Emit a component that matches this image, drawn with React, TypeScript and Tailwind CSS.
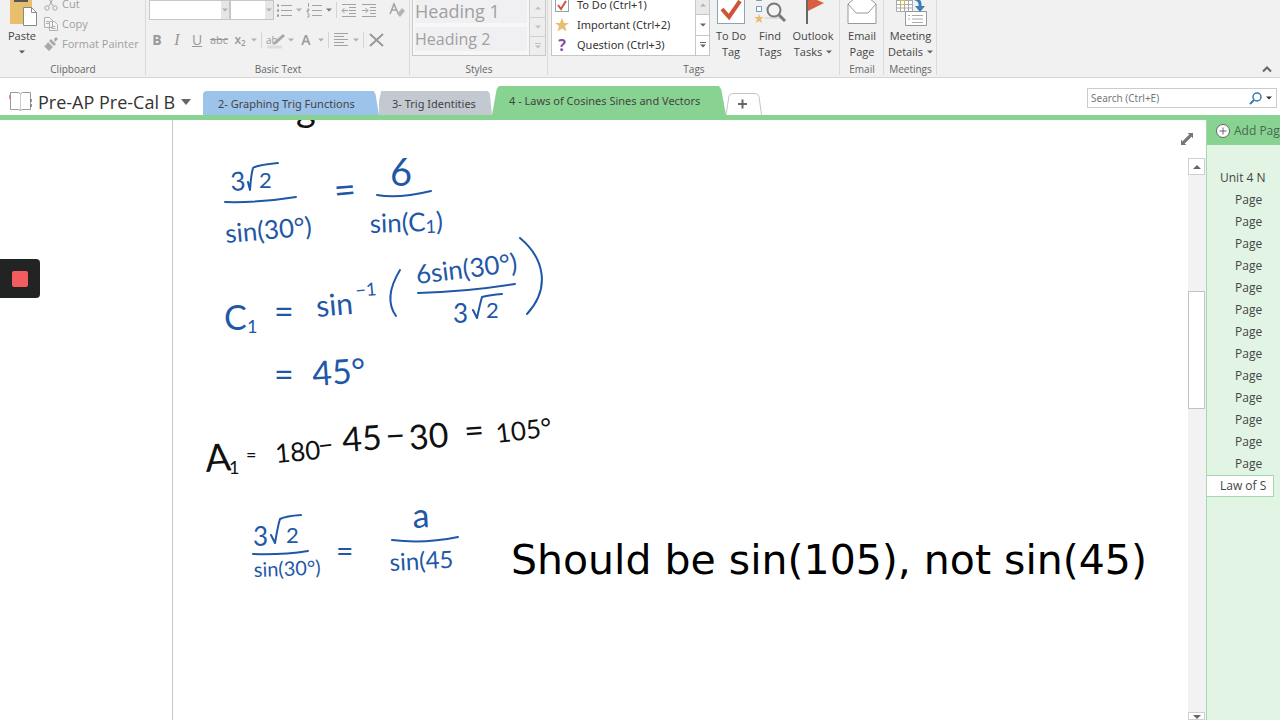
import type { ReactNode } from 'react';

function Caret({ className = 'text-[#b0b0b0]' }: { className?: string }) {
  return (
    <svg viewBox="0 0 6 4" className={`h-1 w-1.5 shrink-0 ${className}`} aria-hidden="true">
      <path d="M0 0.5h6L3 3.5z" fill="currentColor" />
    </svg>
  );
}

function Group({ label, className, children }: { label: string; className: string; children: ReactNode }) {
  return (
    <section aria-label={label} className={`relative flex shrink-0 flex-col justify-end ${className}`}>
      {children}
      <h2 className="flex h-4 shrink-0 items-center justify-center text-[10px] text-[#666]">{label}</h2>
      <span className="absolute right-0 bottom-0.5 h-20 w-px bg-[#dadada]" />
    </section>
  );
}

function BigButton({ icon, top, bottom, caret, className }: { icon: ReactNode; top: string; bottom: string; caret?: boolean; className: string }) {
  return (
    <button type="button" className={`flex flex-col items-center pb-px text-[11px] leading-4 text-[#444] ${className}`}>
      {icon}
      <span className="mt-1">{top}</span>
      <span className="flex items-center gap-1">
        {bottom}
        {caret && <Caret className="text-[#666]" />}
      </span>
    </button>
  );
}

function Rule() {
  return <span className="h-4 w-px bg-[#d5d5d5]" />;
}

function Lines({ d, label, children }: { d: string; label: string; children?: ReactNode }) {
  return (
    <button type="button" aria-label={label}>
      <svg viewBox="0 0 16 16" className="size-4" fill="none" stroke="#a3a3a3">
        <path d={d} />
        {children}
      </svg>
    </button>
  );
}

function ClipboardGroup() {
  return (
    <Group label="Clipboard" className="w-[146px]">
      <div className="flex items-end">
        <button type="button" className="flex w-11 flex-col items-center pb-px text-[11px] leading-4 text-[#444]">
          <svg viewBox="0 0 30 34" className="h-[34px] w-[30px]" aria-hidden="true">
            <rect x="3" y="3" width="22" height="29" fill="#e8bf6c" />
            <rect x="7" y="0" width="14" height="10" fill="#555" />
            <path d="M16.500 15.500h8l5 5v13h-13z" fill="#fff" stroke="#888" />
            <path d="M24.500 15.500v5h5" fill="none" stroke="#888" />
          </svg>
          <span className="mt-0.5">Paste</span>
          <span className="flex h-4 items-center"><Caret className="text-[#555]" /></span>
        </button>
        <div className="flex flex-col pb-[7px] text-[11px] text-[#a0a0a0]">
          <button type="button" className="flex h-5 items-center gap-1">
            <svg viewBox="0 0 14 14" className="size-3.5" fill="none" stroke="#a8a8a8" aria-hidden="true">
              <path d="M4 0l5 9M10 0L5 9" />
              <circle cx="3" cy="11" r="2.200" />
              <circle cx="11" cy="11" r="2.200" />
            </svg>
            Cut
          </button>
          <button type="button" className="flex h-5 items-center gap-1">
            <svg viewBox="0 0 14 14" className="size-3.5" fill="#f5f5f5" stroke="#b0b0b0" aria-hidden="true">
              <path d="M.5.5h5l3 3v7h-8zM5.500 4.500h5l3 3v6h-8z" />
              <path d="M2 4.500h3M2 6.500h3M7.500 9.500h4M7.500 11.500h4" />
            </svg>
            Copy
          </button>
          <button type="button" className="flex h-5 items-center gap-1">
            <svg viewBox="0 0 14 14" className="size-3.5" fill="#a8a8a8" aria-hidden="true">
              <path d="M10 2l2-2 2 2-3 3zM5 4l2-2 5 5-2 2zM4 5l5 5-4 4-5-5 2-1z" />
            </svg>
            Format Painter
          </button>
        </div>
      </div>
    </Group>
  );
}

function BasicTextGroup() {
  return (
    <Group label="Basic Text" className="w-[264px]">
      <div className="flex flex-col gap-2.5 pb-[11px] pl-[3px]">
        <div className="flex h-5 items-center">
          <button type="button" aria-label="Font" className="flex h-5 w-[81px] justify-end border border-[#c6c6c6] bg-white">
            <span className="flex h-full w-2 items-center justify-center bg-[#e6e6e6]"><Caret /></span>
          </button>
          <button type="button" aria-label="Font size" className="flex h-5 w-11 justify-end border border-[#c6c6c6] bg-white">
            <span className="flex h-full w-2 items-center justify-center bg-[#e6e6e6]"><Caret /></span>
          </button>
          <div className="ml-0.5 flex items-center gap-1">
            <Lines label="Bullets" d="M5 3.500h11M5 8.500h11M5 13.500h11">
              <path d="M1 3.500h2M1 8.500h2M1 13.500h2" strokeWidth="2.500" />
            </Lines>
            <Caret />
            <Lines label="Numbering" d="M6 3.500h10M6 8.500h10M6 13.500h10M2.500 1v4M1 7h2v1.500H1V10h2M1 12h2v3H1" />
            <Caret className="text-[#777]" />
            <Rule />
            <Lines label="Decrease indent" d="M1 2.500h14M8 5.500h7M8 8.500h7M8 11.500h7M1 14.500h14M7 8.500H1M3.500 6L1 8.500 3.500 11" />
            <Lines label="Increase indent" d="M1 2.500h14M9 5.500h6M9 8.500h6M9 11.500h6M1 14.500h14M1 8.500h6M4.500 6L7 8.500 4.500 11" />
          </div>
          <button type="button" aria-label="Clear formatting" className="ml-3">
            <svg viewBox="0 0 16 16" className="size-4" fill="none" stroke="#a3a3a3" strokeWidth="1.500">
              <path d="M1 12L5 2l4 9M2.500 8h5" />
              <path d="M8 12l5-6 3 3-5 6z" fill="#b4b4b4" stroke="none" />
            </svg>
          </button>
        </div>
        <div className="flex h-5 items-center gap-1 text-[#999]">
          <button type="button" className="w-4 text-sm font-bold">B</button>
          <button type="button" className="w-4 font-['Liberation_Serif',serif] text-base italic">I</button>
          <button type="button" className="w-4 text-sm underline">U</button>
          <button type="button" className="w-5 text-[11px] line-through">abc</button>
          <button type="button" className="w-3.5 text-xs font-semibold whitespace-nowrap">x<sub className="text-[8px]">2</sub></button>
          <Caret />
          <Rule />
          <button type="button" aria-label="Highlight" className="relative w-[18px] text-left text-[10px] leading-5">
            ab
            <svg viewBox="0 0 20 20" className="absolute inset-0 size-5" aria-hidden="true">
              <path d="M17 4l2 2-9 8-3 1 1-3z" fill="#a6a6a6" />
              <path d="M1 17h15" stroke="#ddd" strokeWidth="3" />
            </svg>
          </button>
          <Caret />
          <button type="button" className="w-4 text-sm font-semibold">A</button>
          <Caret />
          <Rule />
          <Lines label="Align" d="M1 1.500h14M1 4.500h10M1 7.500h14M1 10.500h10M1 13.500h14" />
          <Caret />
          <Rule />
          <Lines label="Delete" d="">
            <path d="M2 2l13 12M15 2L2 14" strokeWidth="2" stroke="#999" />
          </Lines>
        </div>
      </div>
    </Group>
  );
}

function StylesGroup() {
  return (
    <Group label="Styles" className="w-[138px]">
      <div className="mx-0.5 mb-[5px] flex h-[62px] border border-[#c9c9c9] bg-[#f7f7f7]">
        <div className="flex flex-1 flex-col justify-end gap-1 px-0.5 pb-1 text-[#a0a0a0]">
          <button type="button" className="h-6 bg-[#f0f0f2] text-left text-lg leading-6">Heading 1</button>
          <button type="button" className="h-6 bg-[#f0f0f2] text-left text-base leading-6">Heading 2</button>
        </div>
        <div className="flex w-4 flex-col divide-y divide-[#d0d0d0] border-l border-[#d0d0d0] bg-[#eee]">
          <button type="button" aria-label="Previous styles" className="flex flex-1 items-center justify-center"><Caret className="rotate-180 text-[#c0c0c0]" /></button>
          <button type="button" aria-label="Next styles" className="flex flex-1 items-center justify-center"><Caret className="text-[#c0c0c0]" /></button>
          <button type="button" aria-label="More styles" className="flex flex-1 flex-col items-center justify-center gap-px"><span className="h-px w-1.5 bg-[#c0c0c0]" /><Caret className="text-[#c0c0c0]" /></button>
        </div>
      </div>
    </Group>
  );
}

function TagsGroup() {
  return (
    <Group label="Tags" className="w-[292px]">
      <div className="flex items-end">
        <div className="mb-[5px] ml-[3px] flex h-[62px] w-[159px] border border-[#c6c6c6] bg-white">
          <div className="flex flex-1 flex-col font-['Noto_Sans',sans-serif] text-[11px] whitespace-nowrap text-[#333]">
            <button type="button" className="flex h-5 items-center gap-2 pl-[3px]">
              <svg viewBox="0 0 14 14" className="size-3.5" fill="none" aria-hidden="true">
                <rect x=".5" y=".5" width="13" height="13" stroke="#88a6b4" />
                <path d="M3 7l3 4 5-8" stroke="#cf5336" strokeWidth="2" />
              </svg>
              To Do (Ctrl+1)
            </button>
            <button type="button" className="flex h-5 items-center gap-2 pl-[3px]">
              <svg viewBox="0 0 14 14" className="size-3.5" aria-hidden="true">
                <path d="M7 0l2 5h5l-4 3 1.500 5.500L7 10.500 2.500 13.500 4 8 0 5h5z" fill="#e8bd72" />
              </svg>
              Important (Ctrl+2)
            </button>
            <button type="button" className="flex h-5 items-center gap-2 pl-[3px]">
              <span className="w-3.5 text-center text-base leading-5 font-bold text-[#8450a5]">?</span>
              Question (Ctrl+3)
            </button>
          </div>
          <div className="flex w-3.5 flex-col divide-y divide-[#c6c6c6] border-l border-[#c6c6c6]">
            <button type="button" aria-label="Previous tags" className="flex flex-1 items-center justify-center bg-[#e9e9e9]"><Caret className="rotate-180 text-[#b0b0b0]" /></button>
            <button type="button" aria-label="Next tags" className="flex flex-1 items-center justify-center"><Caret className="text-[#666]" /></button>
            <button type="button" aria-label="More tags" className="flex flex-1 flex-col items-center justify-center gap-px"><span className="h-px w-1.5 bg-[#666]" /><Caret className="text-[#666]" /></button>
          </div>
        </div>
        <BigButton
          className="w-[42px]"
          top="To Do"
          bottom="Tag"
          icon={
            <svg viewBox="0 0 28 28" className="size-7" fill="none" aria-hidden="true">
              <rect x=".5" y=".5" width="27" height="27" fill="#fff" stroke="#88a6b4" />
              <path d="M5 13l7 8L23 5" stroke="#cf5336" strokeWidth="4" />
            </svg>
          }
        />
        <BigButton
          className="w-9"
          top="Find"
          bottom="Tags"
          icon={
            <svg viewBox="0 0 32 28" className="h-7 w-8" fill="none" aria-hidden="true">
              <path d="M2.500.5h5v4h-5zM2.500 10.500h5v5h-5z" fill="#fff" stroke="#6f9db5" />
              <path d="M11 12h15M11 22h16" stroke="#ccc" />
              <path d="M5 18l1.200 3H10l-3 2 1 4-3-2-3 2 1-4-3-2h4z" fill="#e8bd72" />
              <circle cx="20" cy="14" r="6.500" fill="#f3f3f3" stroke="#777" strokeWidth="2" />
              <path d="M25 19l6 6" stroke="#777" strokeWidth="3" />
            </svg>
          }
        />
        <BigButton
          className="w-[50px]"
          top="Outlook"
          bottom="Tasks"
          caret
          icon={
            <svg viewBox="0 0 24 28" className="h-7 w-6" aria-hidden="true">
              <path d="M7 0l16 7L7 15z" fill="#d8603f" />
              <path d="M6 0v28" stroke="#666" strokeWidth="2" />
            </svg>
          }
        />
      </div>
    </Group>
  );
}

function Ribbon() {
  return (
    <header className="flex h-[78px] shrink-0 overflow-hidden border-b border-[#d5d5d5] bg-[#f1f1f1]">
      <ClipboardGroup />
      <BasicTextGroup />
      <StylesGroup />
      <TagsGroup />
      <Group label="Email" className="w-11">
        <BigButton
          className="w-full"
          top="Email"
          bottom="Page"
          icon={
            <svg viewBox="0 0 30 28" className="h-7 w-[30px]" fill="#fff" stroke="#999" aria-hidden="true">
              <path d="M1 8L15-4 29 8v19.500H1z" />
              <path d="M1 8l8 9h12l8-9" fill="none" />
            </svg>
          }
        />
      </Group>
      <Group label="Meetings" className="w-[53px]">
        <BigButton
          className="w-full"
          top="Meeting"
          bottom="Details"
          caret
          icon={
            <svg viewBox="0 0 32 30" className="-mb-0.5 h-[30px] w-8" fill="none" aria-hidden="true">
              <path d="M1.500.5h16v15h-16zM1.500 4.500h16M1.500 8.500h16M1.500 12h16M5.500.5v15M9.500.5v15M13.500.5v15" stroke="#aaa" fill="#fff" />
              <path d="M5.500 4.500h4v4h-4z" stroke="#d0bd5d" />
              <path d="M10.500 15.500h21v14h-21z" fill="#fff" stroke="#999" />
              <path d="M13 19.500h2M13 23h2M17 19.500h11M17 23h11M17 26.500h11" stroke="#aaa" />
              <path d="M20 3q6 1 5 8" stroke="#3c7dba" strokeWidth="3" />
              <path d="M20 10h10l-5 6z" fill="#3c7dba" />
            </svg>
          }
        />
      </Group>
      <button type="button" aria-label="Collapse ribbon" className="mt-auto mr-2 mb-1 ml-auto">
        <svg viewBox="0 0 10 8" className="h-2 w-2.5" fill="none" stroke="#666" strokeWidth="2">
          <path d="M1 6.500l4-4 4 4" />
        </svg>
      </button>
    </header>
  );
}

function NotebookBar() {
  return (
    <nav aria-label="Sections" className="flex h-[42px] shrink-0 items-end border-b-[5px] border-[#89d392] bg-white font-['Noto_Sans',sans-serif] text-[11px] text-[#444]">
      <button type="button" className="flex w-[203px] shrink-0 items-center gap-1.5 self-center pt-2.5 pl-[9px] font-['Open_Sans',sans-serif] text-lg leading-6 whitespace-nowrap text-[#333]">
        <svg viewBox="0 0 23 19" className="h-[19px] w-[23px] shrink-0" fill="#fff" stroke="#999" aria-hidden="true">
          <path d="M1.500.5h8l2 1.500 2-1.500h8v17h-8l-2 1-2-1h-8z" />
          <path d="M11.500 2v16" stroke="#ccc" />
          <path d="M1 3v4" stroke="#d67070" strokeWidth="1.500" />
          <path d="M22 7v3M22 12v3" stroke="#777" strokeWidth="1.500" />
        </svg>
        Pre-AP Pre-Cal B
        <svg viewBox="0 0 10 6" className="h-1.5 w-2.5 shrink-0" aria-hidden="true"><path d="M0 0h10L5 6z" fill="#666" /></svg>
      </button>
      <a href="#graphing" className="flex h-6 w-[176px] shrink-0 items-center rounded-tl bg-[#9cc3e9] pt-0.5 pl-[15px] [clip-path:polygon(0_0,97%_0,98%_12%,100%_100%,0_100%)]">2- Graphing Trig Functions</a>
      <a href="#identities" className="flex h-6 w-[113px] shrink-0 items-center bg-[#c2c9d0] pt-0.5 pl-[13px] [clip-path:polygon(2%_0,96%_0,98%_8%,100%_100%,0_100%,0_40%)]">3- Trig Identities</a>
      <a href="#laws" className="flex h-[29px] w-[234px] shrink-0 items-center bg-[#89d392] pt-0.5 pl-[17px] [clip-path:polygon(3%_0,97%_0,98%_12%,100%_100%,0_100%,2%_10%)]">4 - Laws of Cosines Sines and Vectors</a>
      <button type="button" aria-label="New section" className="shrink-0">
        <svg viewBox="0 0 36 22" className="h-[22px] w-9" fill="none">
          <path d="M0 22L3 3Q4 .5 7 .5h22q3 0 4 3l2.500 18.500" stroke="#c5c5c5" />
          <path d="M16.500 6.500v9M12 11h9" stroke="#666" strokeWidth="2" />
        </svg>
      </button>
      <label className="mr-[3px] mb-[7px] ml-auto flex h-5 w-[190px] items-center gap-1 border border-[#ccc] pr-1">
        <input type="search" aria-label="Search" placeholder="Search (Ctrl+E)" className="min-w-0 flex-1 pl-[3px] text-[10px] outline-none placeholder:text-[#777]" />
        <svg viewBox="0 0 13 13" className="size-[13px]" fill="none" stroke="#3b78b5" aria-hidden="true">
          <circle cx="8" cy="5" r="4" strokeWidth="1.500" />
          <path d="M5 8l-4 4" strokeWidth="2" />
        </svg>
        <Caret className="text-[#333]" />
      </label>
    </nav>
  );
}

type InkProps = { x: number; y: number; size: number; tilt?: number; children: ReactNode };

function Ink({ x, y, size, tilt = 0, children }: InkProps) {
  return (
    <text fontSize={size} transform={`translate(${x} ${y}) rotate(${tilt})`}>
      {children}
    </text>
  );
}

function Handwriting() {
  return (
    <svg viewBox="173 120 400 600" className="absolute top-0 left-0 h-[600px] w-[400px] font-['Lato',sans-serif]" aria-label="Handwritten work">
      <g fill="#1f58a6">
        <Ink x={231} y={191} size={26} tilt={-4}>3</Ink>
        <Ink x={259} y={188} size={22}>2</Ink>
        <Ink x={226} y={243} size={26} tilt={-5}>sin(30°)</Ink>
        <Ink x={335} y={204} size={38} tilt={-5}>=</Ink>
        <Ink x={390} y={186} size={38}>6</Ink>
        <Ink x={370} y={233} size={26} tilt={-2}>sin(C<tspan fontSize={18} dy={2}>1</tspan><tspan dy={-2}>)</tspan></Ink>

        <Ink x={224} y={330} size={34}>C</Ink>
        <Ink x={247} y={333} size={18}>1</Ink>
        <Ink x={274} y={324} size={34}>=</Ink>
        <Ink x={317} y={317} size={30} tilt={-5}>sin</Ink>
        <Ink x={356} y={297} size={18} tilt={-5}>−1</Ink>
        <Ink x={417} y={284} size={26} tilt={-7}>6sin(30°)</Ink>
        <Ink x={453} y={323} size={26}>3</Ink>
        <Ink x={486} y={318} size={22}>2</Ink>

        <Ink x={274} y={387} size={34}>=</Ink>
        <Ink x={313} y={386} size={34} tilt={-4}>45°</Ink>

        <Ink x={253} y={546} size={26}>3</Ink>
        <Ink x={286} y={543} size={22}>2</Ink>
        <Ink x={254} y={577} size={20} tilt={-2}>sin(30°)</Ink>
        <Ink x={336} y={562} size={30}>=</Ink>
        <Ink x={413} y={528} size={34} tilt={-3}>a</Ink>
        <Ink x={390} y={571} size={24} tilt={-3}>sin(45</Ink>
      </g>
      <g fill="#111">
        <Ink x={296} y={121} size={38}>g</Ink>
        <Ink x={206} y={472} size={38} tilt={-4}>A</Ink>
        <Ink x={229} y={474} size={18}>1</Ink>
        <Ink x={246} y={461} size={18}>=</Ink>
        <Ink x={276} y={463} size={26} tilt={-5}>180</Ink>
        <Ink x={319} y={455} size={26} tilt={-6}>−</Ink>
        <Ink x={343} y={452} size={34} tilt={-4}>45</Ink>
        <Ink x={386} y={448} size={34} tilt={-3}>−</Ink>
        <Ink x={410} y={450} size={34} tilt={-5}>30</Ink>
        <Ink x={465} y={443} size={34} tilt={-4}>=</Ink>
        <Ink x={497} y={443} size={26} tilt={-7}>105°</Ink>
      </g>
      <g fill="none" stroke="#1f58a6" strokeWidth="2" strokeLinecap="round" strokeLinejoin="round">
        <path d="M248 182l2 8q1-15 3-22q4-3 25-5" />
        <path d="M225 202q34 1 71-5" />
        <path d="M377 195q21 4 54-4" />
        <path d="M400 270q-17 28-4 46" />
        <path d="M418 293q48-1 97-9" />
        <path d="M473 310l4 8q3-14 5-21q8-2 20-3" />
        <path d="M520 238c24 20 31 50 7 76" />
        <path d="M271 535l4 8q3-18 5-24q6-3 21-4" />
        <path d="M253 554q30 1 55-3" />
        <path d="M392 540q32 4 66-3" />
      </g>
    </svg>
  );
}

const pages = Array.from({ length: 13 }, (_, i) => `page-${i + 1}`);

export default function App() {
  return (
    <div className="relative flex h-screen flex-col overflow-hidden bg-white font-['Open_Sans','Noto_Sans',sans-serif]">
      <Ribbon />
      <NotebookBar />
      <div className="flex min-h-0 flex-1">
        <aside className="w-[173px] shrink-0 border-r border-[#c6c6c6]" />
        <main className="relative min-w-0 flex-1 overflow-hidden">
          <Handwriting />
          <p className="absolute top-[415px] left-[338px] font-['DejaVu_Sans',sans-serif] text-[41px] leading-[50px] whitespace-nowrap text-black">
            Should be sin(105), not sin(45)
          </p>
        </main>
        <div className="flex w-[18px] shrink-0 flex-col">
          <button type="button" aria-label="Full page view" className="flex h-[38px] items-center justify-center self-center">
            <svg viewBox="0 0 12 12" className="mr-5 size-3 shrink-0" fill="#777">
              <path d="M7 0h5v5l-1.500-1.500-7 7L5 12H0V7l1.500 1.500 7-7z" stroke="#777" strokeWidth=".5" />
            </svg>
          </button>
          <div className="flex min-h-0 flex-1 flex-col bg-[#f2f2f2]">
            <button type="button" aria-label="Scroll up" className="flex h-[17px] w-[17px] items-center justify-center border border-[#d0d0d0] bg-white">
              <svg viewBox="0 0 8 4" className="h-1 w-2" aria-hidden="true"><path d="M0 4h8L4 0z" fill="#666" /></svg>
            </button>
            <span className="mt-[116px] h-[118px] w-[17px] border border-[#c3c3c3] bg-white" />
            <button type="button" aria-label="Scroll down" className="mt-auto flex h-2 w-[17px] items-end justify-center border border-[#d0d0d0] bg-white">
              <svg viewBox="0 0 8 4" className="h-1 w-2" aria-hidden="true"><path d="M0 0h8L4 4z" fill="#666" /></svg>
            </button>
          </div>
        </div>
        <aside className="w-[74px] shrink-0 overflow-hidden border-l border-[#a5d8ac] bg-[#e2f5e5] text-xs whitespace-nowrap text-[#444]">
          <button type="button" className="flex h-[25px] w-full items-center gap-1 bg-[#89d392] pb-1 pl-[9px] text-[#4a6650]">
            <svg viewBox="0 0 14 14" className="size-3.5 shrink-0" fill="#fff" stroke="#666" aria-hidden="true">
              <circle cx="7" cy="7" r="6.500" />
              <path d="M7 3.500v7M3.500 7h7" />
            </svg>
            Add Page
          </button>
          <nav aria-label="Pages" className="flex flex-col pt-[22px]">
            <a href="#unit" className="h-[22px] pl-[13px] leading-[22px]">Unit 4 N</a>
            {pages.map((id) => (
              <a key={id} href={`#${id}`} className="h-[22px] pl-7 leading-[22px]">Page</a>
            ))}
            <a href="#law" className="h-[22px] w-[67px] border border-l-0 border-[#a5d8ac] bg-white pl-[13px] leading-5">Law of S</a>
          </nav>
        </aside>
      </div>
      <button type="button" aria-label="Stop recording" className="absolute top-[259px] left-0 flex h-[39px] w-10 items-center justify-center rounded-r bg-[#222423]">
        <span className="size-4 rounded-xs bg-[#f25c5e]" />
      </button>
    </div>
  );
}
